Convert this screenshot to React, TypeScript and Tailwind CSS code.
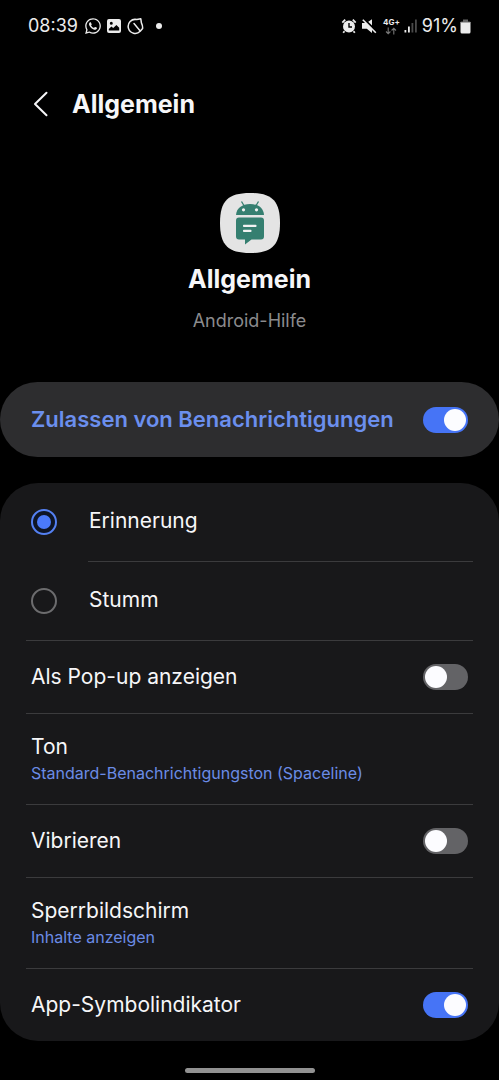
import { useState } from "react";
import { FaWhatsapp } from "react-icons/fa";

// Statusleiste
const StatusBar = () => {
  return (
    <div className="flex h-[52px] items-center justify-between px-7 text-[#ececec]">
      <div className="flex items-center">
        <span className="text-lg">08:39</span>
        <FaWhatsapp className="ml-1.5 size-[18px]" />
        <svg viewBox="0 0 16 16" className="ml-1 size-4" fill="currentColor">
          <path
            fillRule="evenodd"
            d="M3 1h10a2 2 0 0 1 2 2v10a2 2 0 0 1-2 2H3a2 2 0 0 1-2-2V3a2 2 0 0 1 2-2Zm2.3 2.8a1.5 1.5 0 1 0 0 3 1.5 1.5 0 0 0 0-3ZM2.8 12.4h10.4V9.8L10.4 7 7.2 10.1 5.4 8.6 2.8 11Z"
          />
        </svg>
        <svg
          viewBox="0 0 18 18"
          className="ml-1 size-[18px]"
          fill="none"
          stroke="currentColor"
          strokeWidth="1.5"
          strokeLinejoin="round"
          strokeLinecap="round"
        >
          <path d="M10.8 2.600A7 7 0 1 0 14.200 14.300L16.600 11.500C16.800 9 16 7 15.400 5.800L14.800 1.800 10.800 2.600Z" />
          <path d="M8 6.500 13.800 13.400" />
        </svg>
        <span className="ml-3 size-[6px] rounded-full bg-[#ececec]"></span>
      </div>
      <div className="flex items-center">
        <svg viewBox="0 0 16 16" className="size-4" fill="none" stroke="currentColor">
          <circle cx="8" cy="8.5" r="6" fill="currentColor" stroke="none" />
          <path
            d="M1.3 4.6 4.2 1.700M14.700 4.600 11.800 1.700M3.500 13.200 2.200 14.800M12.500 13.200l1.300 1.600"
            strokeWidth="1.8"
          />
          <path d="M8 5v4h3" stroke="#000" strokeWidth="1.4" />
        </svg>
        <svg viewBox="0 0 16 16" className="ml-1 size-4" fill="currentColor">
          <path d="M1 5h4.500L11 1.200V15L5.800 10.800H1Z" />
          <path d="M3 1 15.500 13.500" fill="none" stroke="#000" strokeWidth="2" />
          <path d="M1.800 1.800 14.800 14.800" fill="none" stroke="currentColor" strokeWidth="1.600" />
        </svg>
        <div className="ml-1.5 flex flex-col items-center">
          <span className="text-[8px] font-bold leading-[9px]">4G+</span>
          <svg
            viewBox="0 0 12 8"
            className="h-2 w-3"
            fill="none"
            stroke="#777"
            strokeWidth="1.1"
          >
            <path d="M3.2 0.5v6M1 4.5l2.2 2.3 2.2-2.3M8.8 7.5v-6M6.6 3.5l2.2-2.3L11 3.500" />
          </svg>
        </div>
        <svg viewBox="0 0 14 14" className="ml-1 size-3.5" fill="currentColor">
          <rect x="0.5" y="11" width="1.8" height="2.5" />
          <rect x="4" y="7.5" width="1.8" height="6" />
          <rect x="7.5" y="4" width="1.8" height="9.5" fill="#4a4a4a" />
          <rect x="11" y="0.5" width="1.8" height="13" fill="#4a4a4a" />
        </svg>
        <span className="ml-1 text-lg">91%</span>
        <svg viewBox="0 0 11 15" className="ml-0.5 h-[15px] w-[11px]">
          <path d="M3 0.5h5v2h1.500a1.500 1.500 0 0 1 1.500 1.500H0a1.500 1.500 0 0 1 1.500-1.500H3Z" fill="#666" />
          <path d="M0.500 3.500h10V13a1.500 1.500 0 0 1-1.500 1.500H2A1.500 1.500 0 0 1 0.500 13Z" fill="currentColor" />
        </svg>
      </div>
    </div>
  );
};

// App-Symbol
const AppIcon = () => {
  return (
    <svg viewBox="0 0 60 60" className="size-[60px]" aria-hidden="true">
      <path
        d="M30 0C52 0 60 8 60 30S52 60 30 60 0 52 0 30 8 0 30 0Z"
        fill="#e4e4e4"
      />
      <g fill="#357f70">
        <path d="M16 22C16.500 15 22 11 30 11s13.500 4 14 11Z" />
        <path d="M21.500 8.500l3 5M38.500 8.500l-3 5" stroke="#357f70" strokeWidth="1.300" />
        <path d="M19 24.500h22a3 3 0 0 1 3 3v16a3 3 0 0 1-3 3h-9.500L25 51.500v-5h-6a3 3 0 0 1-3-3v-16a3 3 0 0 1 3-3Z" />
      </g>
      <g fill="#f2f2f2">
        <circle cx="23.500" cy="16.800" r="1.600" />
        <circle cx="36.500" cy="16.800" r="1.600" />
        <rect x="23" y="31.700" width="13.500" height="2.400" rx="0.800" />
        <rect x="23" y="36.700" width="8.500" height="2.400" rx="0.800" />
      </g>
    </svg>
  );
};

type SwitchProps = {
  id: string;
  checked: boolean;
  onChange: (value: boolean) => void;
};

const Switch = ({ id, checked, onChange }: SwitchProps) => {
  return (
    <input
      id={id}
      type="checkbox"
      role="switch"
      checked={checked}
      onChange={(e) => onChange(e.target.checked)}
      className="h-[26px] w-[45px] shrink-0 cursor-pointer appearance-none rounded-full bg-[#636366] p-[2px] before:block before:size-[22px] before:rounded-full before:bg-[#fcfcff] before:transition-transform before:content-[''] checked:bg-[#4674f6] checked:before:translate-x-[19px]"
    />
  );
};

type SwitchRowProps = SwitchProps & { label: string };

const SwitchRow = ({ id, label, checked, onChange }: SwitchRowProps) => {
  return (
    <div className="flex h-[72px] items-center justify-between px-[5px]">
      <label htmlFor={id} className="text-[21px] leading-7">
        {label}
      </label>
      <Switch id={id} checked={checked} onChange={onChange} />
    </div>
  );
};

type LinkRowProps = { title: string; value: string };

const LinkRow = ({ title, value }: LinkRowProps) => {
  return (
    <button className="flex h-[90px] w-full cursor-pointer flex-col justify-center px-[5px] text-left">
      <span className="text-[21px] leading-7">{title}</span>
      <span className="text-base text-[#6b8ce6]">{value}</span>
    </button>
  );
};

type RadioRowProps = {
  label: string;
  value: string;
  selected: string;
  onSelect: (value: string) => void;
};

const RadioRow = ({ label, value, selected, onSelect }: RadioRowProps) => {
  return (
    <label className="flex h-[78px] cursor-pointer items-center pl-[5px]">
      <input
        type="radio"
        name="mode"
        value={value}
        checked={selected === value}
        onChange={() => onSelect(value)}
        className="grid size-[26px] shrink-0 cursor-pointer appearance-none place-items-center rounded-full border-2 border-[#6c6c6e] checked:before:size-3.5 checked:border-[#5480f2] checked:bg-[#0e1526] checked:before:rounded-full checked:before:bg-[#4b7afa] checked:before:content-['']"
      />
      <span className="ml-8 pb-0.5 text-[21px] leading-7">{label}</span>
    </label>
  );
};

const Divider = ({ inset = false }: { inset?: boolean }) => (
  <hr className={inset ? "ml-[62px] border-[#3b3b3d]" : "border-[#3b3b3d]"} />
);

const App = () => {
  const [allowed, setAllowed] = useState(true);
  const [mode, setMode] = useState("erinnerung");
  const [popup, setPopup] = useState(false);
  const [vibrate, setVibrate] = useState(false);
  const [badge, setBadge] = useState(true);

  return (
    <div className="flex min-h-screen flex-col bg-black font-['Inter',sans-serif] text-[#f6f6f8]">
      <StatusBar />

      {/* Kopfzeile */}
      <header className="flex h-[104px] items-center pl-8">
        <button aria-label="Zurück" className="cursor-pointer">
          <svg
            viewBox="0 0 18 26"
            className="h-[26px] w-[18px]"
            fill="none"
            stroke="currentColor"
            strokeWidth="2"
            strokeLinecap="round"
            strokeLinejoin="round"
          >
            <path d="M14.500 1.800 3 13l11.500 11.200" />
          </svg>
        </button>
        <h1 className="ml-[22px] text-[25px] leading-8 font-bold">Allgemein</h1>
      </header>

      {/* App-Info */}
      <section className="flex flex-col items-center pt-[37px]">
        <AppIcon />
        <h2 className="mt-2.5 text-[25px] leading-8 font-bold">Allgemein</h2>
        <p className="mt-3 text-lg text-[#8b8b8d]">Android-Hilfe</p>
      </section>

      <main className="mt-[47px] flex flex-col gap-[26px]">
        <div className="flex h-[75px] items-center justify-between rounded-[38px] bg-[#2d2d2f] px-[31px]">
          <label htmlFor="allow" className="text-[22px] font-semibold text-[#6b8fee]">
            Zulassen von Benachrichtigungen
          </label>
          <Switch id="allow" checked={allowed} onChange={setAllowed} />
        </div>

        <div className="rounded-[38px] bg-[#18181a] px-[26px]">
          <RadioRow label="Erinnerung" value="erinnerung" selected={mode} onSelect={setMode} />
          <Divider inset />
          <RadioRow label="Stumm" value="stumm" selected={mode} onSelect={setMode} />
          <Divider />
          <SwitchRow id="popup" label="Als Pop-up anzeigen" checked={popup} onChange={setPopup} />
          <Divider />
          <LinkRow title="Ton" value="Standard-Benachrichtigungston (Spaceline)" />
          <Divider />
          <SwitchRow id="vibrate" label="Vibrieren" checked={vibrate} onChange={setVibrate} />
          <Divider />
          <LinkRow title="Sperrbildschirm" value="Inhalte anzeigen" />
          <Divider />
          <SwitchRow id="badge" label="App-Symbolindikator" checked={badge} onChange={setBadge} />
        </div>
      </main>

      {/* Navigationsleiste */}
      <div className="mx-auto mb-[7px] mt-auto h-[5px] w-[130px] rounded-full bg-[#929292]"></div>
    </div>
  );
};

export default App;
